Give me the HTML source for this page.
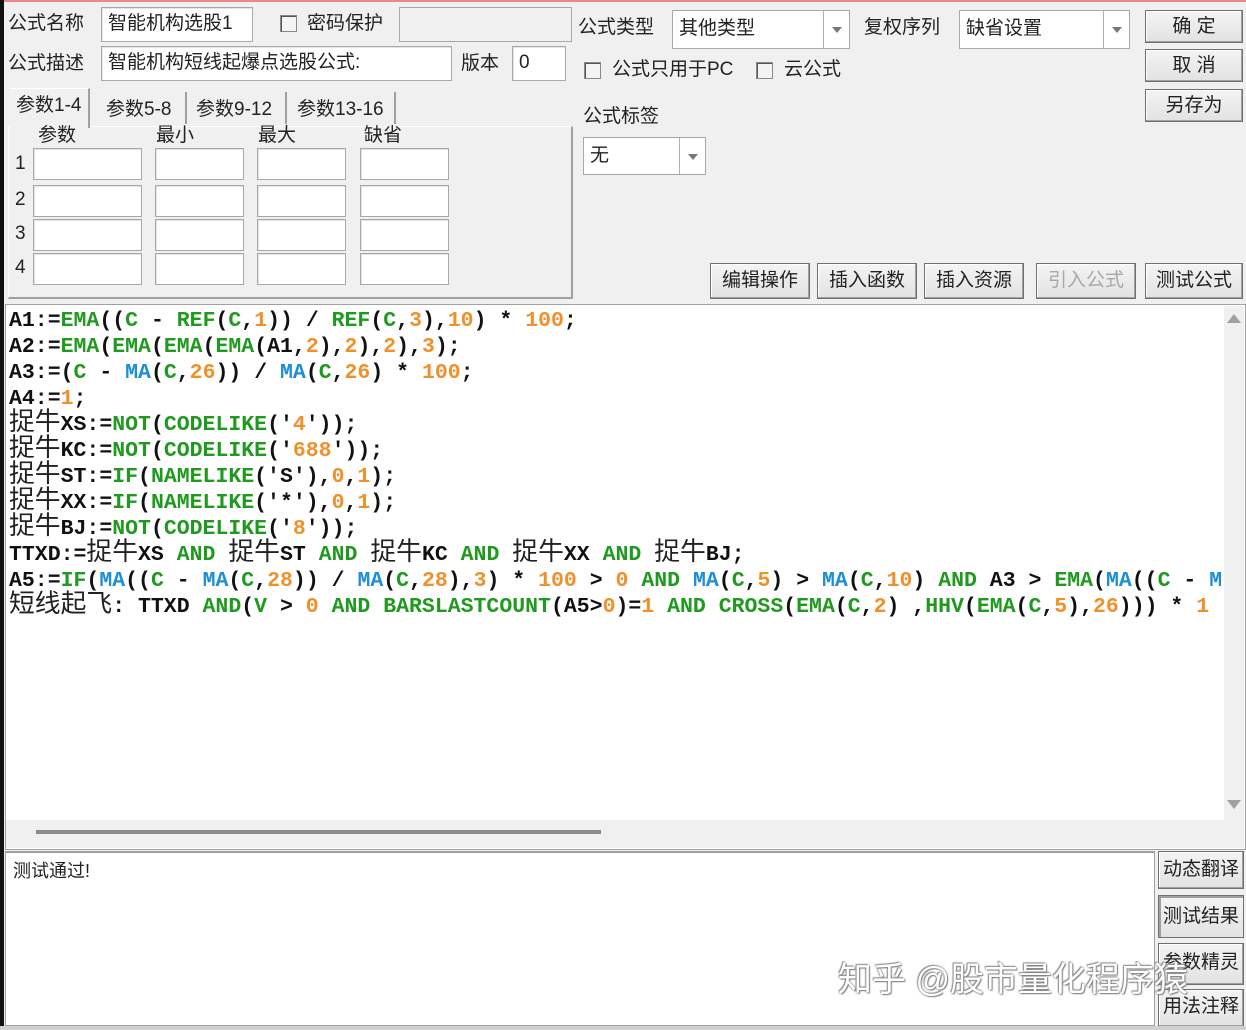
<!DOCTYPE html>
<html><head><meta charset="utf-8"><style>
*{margin:0;padding:0;box-sizing:border-box}
body{width:1246px;height:1030px;background:#f0f0f0;position:relative;overflow:hidden;font-family:"Liberation Sans","Noto Sans CJK SC",sans-serif;font-size:19px;color:#222}
.a{position:absolute}
.lbl{position:absolute;white-space:nowrap;line-height:24px}
.in{position:absolute;background:#fff;border:1px solid #a8a8a8;box-shadow:inset 1px 1px 0 #e4e4e4;line-height:32px;padding-left:6px;white-space:nowrap}
.cb{position:absolute;width:17px;height:17px;border:1px solid #888;background:#f4f4f4;box-shadow:inset 1px 1px 0 #555}
.btn{position:absolute;border:1px solid #707070;background:linear-gradient(#f4f4f4,#e2e2e2);box-shadow:inset -1px -1px 0 #a0a0a0,inset 1px 1px 0 #fff;text-align:center;white-space:nowrap}
.sel{position:absolute;background:#fff;border:1px solid #a8a8a8;line-height:36px;padding-left:6px}
.sel .dd{position:absolute;right:0;top:0;bottom:0;width:26px;border-left:1px solid #b0b0b0}
.sel .dd:after{content:"";position:absolute;left:8px;top:16px;border-left:5px solid transparent;border-right:5px solid transparent;border-top:6px solid #777}
.code{position:absolute;left:9px;top:308px;font-family:"Liberation Mono",monospace;font-weight:bold;font-size:21.5px;white-space:normal;color:#111}
.code div{height:26px;line-height:26px;overflow:visible;white-space:pre}
.code i{font-style:normal;font-weight:normal;font-family:"Noto Sans CJK SC",sans-serif;font-size:25.8px;line-height:10px;color:#222;display:inline-block;vertical-align:baseline}
.g{color:#1f9a1f}.b{color:#1d8fd6}.o{color:#f0902a}
</style></head><body>
<div class="a" style="left:0;top:0;width:1246px;height:2px;background:#e88"></div>
<div class="a" style="left:0;top:0;width:4px;height:1030px;background:#111"></div>

<div class="lbl" style="left:8px;top:12px">公式名称</div>
<div class="in" style="left:101px;top:7px;width:152px;height:35px">智能机构选股1</div>
<div class="cb" style="left:280px;top:15px"></div>
<div class="lbl" style="left:307px;top:12px">密码保护</div>
<div class="a" style="left:399px;top:7px;width:173px;height:35px;border:1px solid #a8a8a8;background:#f0f0f0"></div>
<div class="lbl" style="left:8px;top:52px">公式描述</div>
<div class="in" style="left:101px;top:46px;width:351px;height:35px">智能机构短线起爆点选股公式:</div>
<div class="lbl" style="left:461px;top:52px">版本</div>
<div class="in" style="left:512px;top:46px;width:54px;height:35px">0</div>

<div class="a" style="left:8px;top:126px;width:565px;height:173px;border:1px solid #fff;border-right:2px solid #a0a0a0;border-bottom:2px solid #a0a0a0"></div>
<div class="a" style="left:10px;top:88px;width:80px;height:40px;background:#f0f0f0;border-top:1px solid #fff;border-right:2px solid #a0a0a0"></div>
<div class="lbl" style="left:16px;top:94px">参数1-4</div>
<div class="lbl" style="left:106px;top:98px">参数5-8</div>
<div class="a" style="left:185px;top:92px;width:2px;height:32px;background:#a0a0a0"></div>
<div class="lbl" style="left:196px;top:98px">参数9-12</div>
<div class="a" style="left:285px;top:92px;width:2px;height:32px;background:#a0a0a0"></div>
<div class="lbl" style="left:297px;top:98px">参数13-16</div>
<div class="a" style="left:394px;top:92px;width:2px;height:32px;background:#a0a0a0"></div>
<div class="lbl" style="left:38px;top:124px">参数</div>
<div class="lbl" style="left:156px;top:124px">最小</div>
<div class="lbl" style="left:258px;top:124px">最大</div>
<div class="lbl" style="left:364px;top:124px">缺省</div>
<div class="lbl" style="left:15px;top:152px">1</div>
<div class="lbl" style="left:15px;top:188px">2</div>
<div class="lbl" style="left:15px;top:222px">3</div>
<div class="lbl" style="left:15px;top:256px">4</div>
<div class="in" style="left:33px;top:148px;width:109px;height:32px"></div><div class="in" style="left:155px;top:148px;width:89px;height:32px"></div><div class="in" style="left:257px;top:148px;width:89px;height:32px"></div><div class="in" style="left:360px;top:148px;width:89px;height:32px"></div>
<div class="in" style="left:33px;top:185px;width:109px;height:32px"></div><div class="in" style="left:155px;top:185px;width:89px;height:32px"></div><div class="in" style="left:257px;top:185px;width:89px;height:32px"></div><div class="in" style="left:360px;top:185px;width:89px;height:32px"></div>
<div class="in" style="left:33px;top:219px;width:109px;height:32px"></div><div class="in" style="left:155px;top:219px;width:89px;height:32px"></div><div class="in" style="left:257px;top:219px;width:89px;height:32px"></div><div class="in" style="left:360px;top:219px;width:89px;height:32px"></div>
<div class="in" style="left:33px;top:253px;width:109px;height:32px"></div><div class="in" style="left:155px;top:253px;width:89px;height:32px"></div><div class="in" style="left:257px;top:253px;width:89px;height:32px"></div><div class="in" style="left:360px;top:253px;width:89px;height:32px"></div>

<div class="lbl" style="left:578px;top:16px">公式类型</div>
<div class="sel" style="left:672px;top:10px;width:178px;height:39px">其他类型<div class="dd"></div></div>
<div class="lbl" style="left:864px;top:16px">复权序列</div>
<div class="sel" style="left:959px;top:10px;width:171px;height:39px">缺省设置<div class="dd"></div></div>
<div class="btn" style="left:1145px;top:10px;width:98px;height:33px;line-height:31px">确 定</div>
<div class="btn" style="left:1145px;top:49px;width:98px;height:33px;line-height:31px">取 消</div>
<div class="btn" style="left:1145px;top:89px;width:98px;height:33px;line-height:31px">另存为</div>
<div class="cb" style="left:584px;top:62px"></div>
<div class="lbl" style="left:612px;top:58px">公式只用于PC</div>
<div class="cb" style="left:756px;top:62px"></div>
<div class="lbl" style="left:784px;top:58px">云公式</div>
<div class="lbl" style="left:583px;top:105px">公式标签</div>
<div class="sel" style="left:583px;top:137px;width:123px;height:38px">无<div class="dd"></div></div>

<div class="btn" style="left:710px;top:263px;width:100px;height:36px;line-height:34px">编辑操作</div>
<div class="btn" style="left:817px;top:263px;width:100px;height:36px;line-height:34px">插入函数</div>
<div class="btn" style="left:924px;top:263px;width:100px;height:36px;line-height:34px">插入资源</div>
<div class="btn" style="left:1036px;top:263px;width:100px;height:36px;line-height:34px;color:#a8a8a8">引入公式</div>
<div class="btn" style="left:1145px;top:263px;width:98px;height:36px;line-height:34px">测试公式</div>

<div class="a" style="left:5px;top:304px;width:1241px;height:546px;background:#fff;border:1px solid #a0a0a0"></div>
<div class="a" style="left:1224px;top:306px;width:20px;height:520px;background:#f0f0f0"></div>
<div class="a" style="left:1227px;top:314px;border-left:7px solid transparent;border-right:7px solid transparent;border-bottom:9px solid #a0a0a0"></div>
<div class="a" style="left:1227px;top:800px;border-left:7px solid transparent;border-right:7px solid transparent;border-top:9px solid #a0a0a0"></div>
<div class="a" style="left:6px;top:820px;width:1238px;height:28px;background:#f0f0f0"></div>
<div class="a" style="left:36px;top:830px;width:565px;height:4px;background:#8a8a8a"></div>
<div class="code"><div>A1:=<span class="g">EMA</span>((<span class="g">C</span> - <span class="g">REF</span>(<span class="g">C</span>,<span class="o">1</span>)) / <span class="g">REF</span>(<span class="g">C</span>,<span class="o">3</span>),<span class="o">10</span>) * <span class="o">100</span>;</div><div>A2:=<span class="g">EMA</span>(<span class="g">EMA</span>(<span class="g">EMA</span>(<span class="g">EMA</span>(A1,<span class="o">2</span>),<span class="o">2</span>),<span class="o">2</span>),<span class="o">3</span>);</div><div>A3:=(<span class="g">C</span> - <span class="b">MA</span>(<span class="g">C</span>,<span class="o">26</span>)) / <span class="b">MA</span>(<span class="g">C</span>,<span class="o">26</span>) * <span class="o">100</span>;</div><div>A4:=<span class="o">1</span>;</div><div><i>捉牛</i>XS:=<span class="g">NOT</span>(<span class="g">CODELIKE</span>('<span class="o">4</span>'));</div><div><i>捉牛</i>KC:=<span class="g">NOT</span>(<span class="g">CODELIKE</span>('<span class="o">688</span>'));</div><div><i>捉牛</i>ST:=<span class="g">IF</span>(<span class="g">NAMELIKE</span>('S'),<span class="o">0</span>,<span class="o">1</span>);</div><div><i>捉牛</i>XX:=<span class="g">IF</span>(<span class="g">NAMELIKE</span>('*'),<span class="o">0</span>,<span class="o">1</span>);</div><div><i>捉牛</i>BJ:=<span class="g">NOT</span>(<span class="g">CODELIKE</span>('<span class="o">8</span>'));</div><div>TTXD:=<i>捉牛</i>XS <span class="g">AND</span> <i>捉牛</i>ST <span class="g">AND</span> <i>捉牛</i>KC <span class="g">AND</span> <i>捉牛</i>XX <span class="g">AND</span> <i>捉牛</i>BJ;</div><div>A5:=<span class="g">IF</span>(<span class="b">MA</span>((<span class="g">C</span> - <span class="b">MA</span>(<span class="g">C</span>,<span class="o">28</span>)) / <span class="b">MA</span>(<span class="g">C</span>,<span class="o">28</span>),<span class="o">3</span>) * <span class="o">100</span> &gt; <span class="o">0</span> <span class="g">AND</span> <span class="b">MA</span>(<span class="g">C</span>,<span class="o">5</span>) &gt; <span class="b">MA</span>(<span class="g">C</span>,<span class="o">10</span>) <span class="g">AND</span> A3 &gt; <span class="g">EMA</span>(<span class="b">MA</span>((<span class="g">C</span> - <span class="b">M</span></div><div><i>短线起飞</i>: TTXD <span class="g">AND</span>(<span class="g">V</span> &gt; <span class="o">0</span> <span class="g">AND</span> <span class="g">BARSLASTCOUNT</span>(A5&gt;<span class="o">0</span>)=<span class="o">1</span> <span class="g">AND</span> <span class="g">CROSS</span>(<span class="g">EMA</span>(<span class="g">C</span>,<span class="o">2</span>) ,<span class="g">HHV</span>(<span class="g">EMA</span>(<span class="g">C</span>,<span class="o">5</span>),<span class="o">26</span>))) * <span class="o">1</span></div></div>
<div class="a" style="left:1221px;top:306px;width:3px;height:514px;background:#fff"></div>

<div class="a" style="left:5px;top:851px;width:1150px;height:175px;background:#fff;border:1px solid #a0a0a0;border-top:2px solid #a0a0a0"></div>
<div class="lbl" style="left:13px;top:859px;font-size:18px">测试通过!</div>
<div class="btn" style="left:1158px;top:851px;width:86px;height:38px;line-height:36px">动态翻译</div>
<div class="btn" style="left:1158px;top:895px;width:86px;height:43px;line-height:42px;box-shadow:inset 2px 2px 0 #a0a0a0">测试结果</div>
<div class="btn" style="left:1158px;top:943px;width:86px;height:42px;line-height:38px">参数精灵</div>
<div class="btn" style="left:1158px;top:989px;width:86px;height:38px;line-height:34px">用法注释</div>
<div class="lbl" style="left:838px;top:960px;font-size:34px;line-height:40px;color:#fff;text-shadow:0 0 2px #777,1px 1px 1px #888,-1px -1px 1px #999">知乎 @股市量化程序猿</div>
<div class="a" style="left:0;top:1026px;width:1246px;height:4px;background:#d0d0d0"></div>
</body></html>
